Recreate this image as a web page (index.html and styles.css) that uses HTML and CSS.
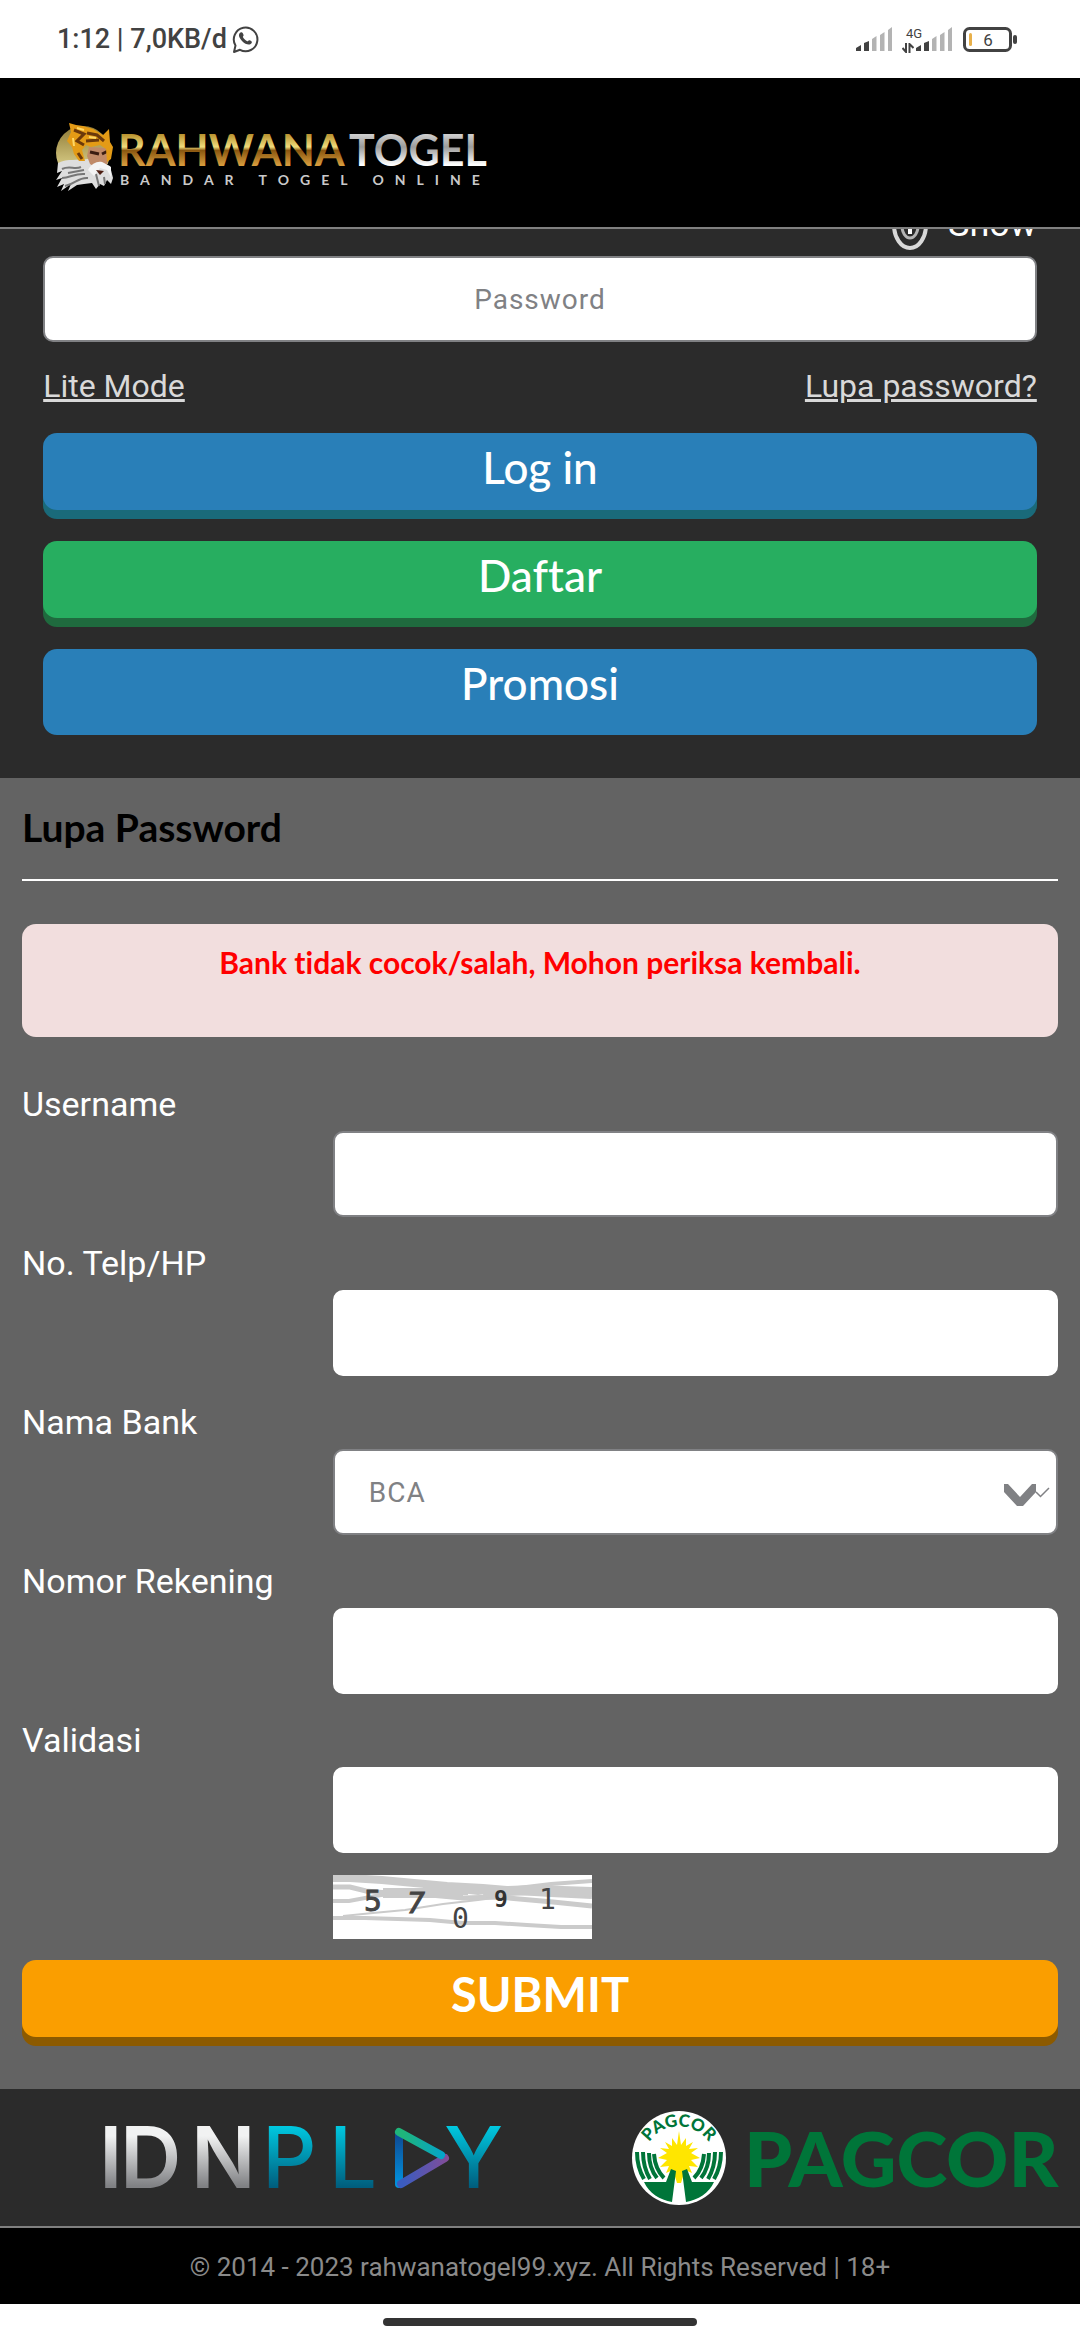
FILE: index.html
```html
<!DOCTYPE html>
<html lang="id">
<head>
  <meta charset="UTF-8" />
  <meta name="viewport" content="width=device-width, initial-scale=1.0"/>
  <title>Lupa Password</title>
  <link rel="stylesheet" href="styles.css">
</head>
<body>

  <div class="status-bar">
    <div class="status-left">
      <span>1:12 | 7,0KB/d</span>
      <svg width="27" height="29" viewBox="0 0 27 29">
        <path d="M2 27 L3.500 20.500 A11.800 11.800 0 1 1 8 24.800 Z" fill="none" stroke="#424242" stroke-width="2" stroke-linejoin="round"/>
        <path d="M8.500 7.500 C10 6.500 11 8 11.600 10 C11.800 11 10.500 11.500 11 12.300 C12 14.200 13.500 15.400 15.300 16.200 C16.200 16.300 16.500 14.800 17.500 15.200 C19.500 16 20.500 16.700 19.500 18.300 C17.500 21 13 19 10.500 16.500 C7.500 13.500 5.500 9.500 8.500 7.500 Z" fill="#424242"/>
      </svg>
    </div>
    <div class="status-right">
      <svg width="37" height="25" viewBox="0 0 37 25">
        <path d="M0 24 V21 L5 18 V24 Z M8 24 V16 L13 14 V24 Z" fill="#424242"/>
        <path d="M16 24 V12 L20.500 9 V24 Z M24 24 V8 L28.500 5 V24 Z M32 24 V3 L36 0 V24 Z" fill="#b3b3b3"/>
      </svg>
      <div class="network">
        <span>4G</span>
        <svg width="12" height="10" viewBox="0 0 12 10">
          <path d="M4 0 V9 L0.500 5 M7.500 10 V1 L11.500 5" fill="none" stroke="#424242" stroke-width="2"/>
        </svg>
      </div>
      <svg width="37" height="25" viewBox="0 0 37 25">
        <path d="M0 24 V21 L5 18 V24 Z M8 24 V16 L13 14 V24 Z" fill="#424242"/>
        <path d="M16 24 V12 L20.500 9 V24 Z M24 24 V8 L28.500 5 V24 Z M32 24 V3 L36 0 V24 Z" fill="#b3b3b3"/>
      </svg>
      <svg class="battery" width="55" height="25" viewBox="0 0 55 25">
        <rect x="1.500" y="1.500" width="46" height="22" rx="5" fill="none" stroke="#424242" stroke-width="3"/>
        <rect x="6" y="6" width="3" height="13" rx="1.500" fill="#e8b04a"/>
        <rect x="50" y="8" width="4" height="9" rx="2" fill="#424242"/>
        <text x="25" y="19" text-anchor="middle">6</text>
      </svg>
    </div>
  </div>

  <header>
    <svg class="brand" width="450" height="72" viewBox="0 0 450 72" role="img" aria-label="RAHWANATOGEL">
      <defs>
        <linearGradient id="gold" x1="0" y1="0" x2="0" y2="1">
          <stop offset="0.200" stop-color="#b8922f"/>
          <stop offset="0.450" stop-color="#f0dc7c"/>
          <stop offset="0.520" stop-color="#8a5710"/>
          <stop offset="0.800" stop-color="#d59a3c"/>
        </linearGradient>
        <linearGradient id="silver" x1="0" y1="0" x2="0" y2="1">
          <stop offset="0.200" stop-color="#cfcfcf"/>
          <stop offset="0.450" stop-color="#9c9c9c"/>
          <stop offset="0.800" stop-color="#ffffff"/>
        </linearGradient>
        <linearGradient id="moon" x1="0" y1="0" x2="0" y2="1">
          <stop offset="0" stop-color="#8f7a35"/>
          <stop offset="1" stop-color="#efe6a0"/>
        </linearGradient>
      </defs>
      <!-- moon, beard, face, crown -->
      <circle cx="33" cy="33" r="27" fill="url(#moon)"/>
      <path d="M8 43 C18 38 27 41 38 39 L60 46 L63 58 L61 64 L57 60 L54 66 L50 64 L46 69 L42 63 L34 64 L27 65 L18 71 L21 64 L11 71 L14 64 L7 67 L12 58 L6 60 L12 51 L7 53 Z" fill="#dedede"/>
      <path d="M12 49 C20 45 24 50 31 47 M12 58 C20 58 25 53 35 54 M15 66 C26 64 28 57 38 58 M18 53 L34 50 M46 54 L49 66 M54 57 L55 64" stroke="#777" stroke-width="2" fill="none"/>
      <path d="M39 27 L57 28 L59 38 L56 47 L47 48 L40 44 L37 36 Z" fill="#c08a68"/>
      <path d="M40 32 L49 34 M52 34 L58 31" stroke="#3b1d12" stroke-width="3"/>
      <path d="M38 50 C42 42 50 40 54 43 L61 47 L61 57 L57 50 L50 48 L44 56 Z" fill="#f4f4f4"/>
      <path d="M46 50 L54 51 L50 55 Z" fill="#4d1e12"/>
      <path d="M19 3 L26 5 L33 6 L43 9 L53 15 L59 9 L60 22 L63 27 L61 39 L57 42 L56 29 L50 25 L41 27 L36 25 L32 30 L35 41 L29 41 L24 34 L22 27 L17 21 L21 12 Z" fill="#e49b16"/>
      <path d="M24 10 L34 14 L27 21 L34 25 M37 13 L47 15 L54 21 M36 21 L49 20 M28 33 L32 39" stroke="#6b390b" stroke-width="3" fill="none"/>
      <path d="M27 8 L34 10 M39 17 L46 18 M23 18 L24 26" stroke="#ffd866" stroke-width="2"/>
      <text class="brand-name" x="68" y="46" fill="url(#gold)">RAHWANA</text>
      <text class="brand-name" x="299" y="46" fill="url(#silver)">TOGEL</text>
      <text class="brand-tagline" x="70" y="65" fill="#c9c9c9">BANDAR TOGEL ONLINE</text>
    </svg>
  </header>

  <section class="login">
    <div class="show-row">
      <svg width="36" height="50" viewBox="0 0 36 50">
        <ellipse cx="18" cy="25" rx="16" ry="23" fill="none" stroke="#d8d8d8" stroke-width="4"/>
        <ellipse cx="18" cy="26" rx="8" ry="12" fill="none" stroke="#b5b5b5" stroke-width="3"/>
        <path d="M18 23 V34" stroke="#fff" stroke-width="4"/>
      </svg>
      <button type="button" class="show-btn">Show</button>
    </div>
    <input class="field password" type="password" placeholder="Password" aria-label="Password">
    <div class="links">
      <a href="#">Lite Mode</a>
      <a href="#">Lupa password?</a>
    </div>
    <button class="btn btn-blue">Log in</button>
    <button class="btn btn-green">Daftar</button>
    <button class="btn btn-flat">Promosi</button>
  </section>

  <main>
    <h1>Lupa Password</h1>
    <div class="alert"><p>Bank tidak cocok/salah, Mohon periksa kembali.</p></div>

    <form>
      <div class="row">
        <label for="username">Username</label>
        <input class="field" id="username" type="text">
      </div>
      <div class="row">
        <label for="phone">No. Telp/HP</label>
        <input class="field plain" id="phone" type="text">
      </div>
      <div class="row">
        <label for="bank">Nama Bank</label>
        <div class="select-wrap">
          <select class="field" id="bank">
            <option>BCA</option>
          </select>
          <svg class="chevrons" width="46" height="22" viewBox="0 0 46 22">
            <path d="M0 0 H4 L16 13 L28 0 H32 V8 L19 22 H13 L0 8 Z" fill="#808184"/>
            <path d="M32 8 L36.500 12.500 L45 4" fill="none" stroke="#808184" stroke-width="1.500"/>
          </svg>
        </div>
      </div>
      <div class="row">
        <label for="rekening">Nomor Rekening</label>
        <input class="field plain" id="rekening" type="text">
      </div>
      <div class="row">
        <label for="validasi">Validasi</label>
        <input class="field plain" id="validasi" type="text">
      </div>
      <svg class="captcha" width="259" height="64" viewBox="0 0 259 64">
        <rect width="259" height="64" fill="#fff"/>
        <g fill="none" stroke="#cbcbcb">
          <path d="M0 3 H17 L49 5 L81 8 L114 11 L150 13 L185 16 L218 18 L259 20" stroke-width="8"/>
          <path d="M0 12 H17 L33 16 L65 19 L97 20 L130 23 L165 22 L220 27 L259 31" stroke-width="5"/>
          <path d="M0 26 H16 L48 20 L81 18 L110 14 L145 18 L185 13 L218 9 L259 6" stroke-width="4"/>
          <path d="M50 18 H130 M90 15 H135 M150 17 L200 15 L259 17" stroke-width="10"/>
          <path d="M10 41 L40 38 L72 35 L110 29 L145 25 L175 21" stroke-width="2"/>
          <path d="M0 43 H32 L97 45 L130 48 L162 48 L194 50 L228 52 H259" stroke-width="4"/>
        </g>
        <text class="digit digit-wide" x="31" y="36">5</text>
        <text class="digit digit-wide digit-slant" x="74" y="38">7</text>
        <text class="digit" x="119" y="53">0</text>
        <text class="digit digit-small" x="161" y="32">9</text>
        <text class="digit" x="206" y="34">1</text>
      </svg>
      <button class="btn btn-orange" type="submit">SUBMIT</button>
    </form>
  </main>

  <div class="partners">
    <svg width="404" height="94" viewBox="0 -15 404 94" role="img" aria-label="IDNPLAY">
      <defs>
        <linearGradient id="steel" gradientUnits="userSpaceOnUse" x1="0" y1="10" x2="0" y2="60">
          <stop offset="0" stop-color="#f1f2f2"/>
          <stop offset="1" stop-color="#808184"/>
        </linearGradient>
        <linearGradient id="teal" gradientUnits="userSpaceOnUse" x1="0" y1="0" x2="0" y2="62">
          <stop offset="0" stop-color="#00c8e0"/>
          <stop offset="1" stop-color="#005c7c"/>
        </linearGradient>
        <linearGradient id="side1" gradientUnits="userSpaceOnUse" x1="0" y1="5" x2="0" y2="60">
          <stop offset="0" stop-color="#10458e"/>
          <stop offset="1" stop-color="#0095e0"/>
        </linearGradient>
        <linearGradient id="side2" gradientUnits="userSpaceOnUse" x1="298" y1="0" x2="345" y2="0">
          <stop offset="0" stop-color="#1fb57a"/>
          <stop offset="1" stop-color="#00a2d8"/>
        </linearGradient>
        <linearGradient id="side3" gradientUnits="userSpaceOnUse" x1="298" y1="0" x2="345" y2="0">
          <stop offset="0" stop-color="#3a5cc0"/>
          <stop offset="1" stop-color="#864c96"/>
        </linearGradient>
      </defs>
      <text class="idn" x="-6" y="62" fill="url(#steel)">I</text>
      <text class="idn" x="15" y="62" fill="url(#steel)">D</text>
      <text class="idn" x="86" y="62" fill="url(#steel)">N</text>
      <text class="play" x="157" y="62" fill="url(#teal)">P</text>
      <text class="play" x="224" y="62" fill="url(#teal)">L</text>
      <g fill="none" stroke-width="8" stroke-linecap="round">
        <path d="M294 7 V58" stroke="url(#side1)"/>
        <path d="M296 58 L340 32" stroke="url(#side3)"/>
        <path d="M294 6 L336 29" stroke="url(#side2)"/>
      </g>
      <text class="play" x="339" y="62" fill="url(#teal)">Y</text>
    </svg>
    <svg width="428" height="94" viewBox="0 0 428 94" role="img" aria-label="PAGCOR">
      <defs>
        <path id="arc" d="M12 43 A36 36 0 0 1 82 43"/>
      </defs>
      <circle cx="47" cy="47" r="47" fill="#fff"/>
      <text class="badge-text"><textPath href="#arc" startOffset="50%" text-anchor="middle">PAGCOR</textPath></text>
      <path d="M47 20 L49 34 L54 27 L54 35 L61 31 L57 38 L66 37 L59 42 L68 47 L59 49 L66 56 L57 55 L60 62 L53 59 L49 72 L45 72 L41 59 L34 62 L37 55 L28 56 L35 49 L26 47 L35 42 L28 37 L37 38 L33 31 L40 35 L40 27 L45 34 Z" fill="#ffe600"/>
      <g fill="#007539">
        <path d="M12 71 H34 L39 58 L44 60 L40 91 C28 89 17 82 12 71 Z"/>
        <path d="M82 71 H60 L55 58 L50 60 L54 91 C66 89 77 82 82 71 Z"/>
      </g>
      <g fill="none" stroke="#007539" stroke-width="4">
        <path d="M5 41 Q5 56 12 68 M11 41 Q11 56 18 68 M17 42 Q17 57 25 67 M22 43 Q23 58 32 67"/>
        <path d="M89 41 Q89 56 82 68 M83 41 Q83 56 76 68 M77 42 Q77 57 69 67 M72 43 Q71 58 62 67"/>
      </g>
      <text class="pagcor" x="112" y="76">PAGCOR</text>
    </svg>
  </div>

  <footer>© 2014 - 2023 rahwanatogel99.xyz. All Rights Reserved | 18+</footer>
  <div class="nav-bar"><span class="handle"></span></div>

</body>
</html>
```

FILE: styles.css
```css
:root {
  --dark: #2b2b2b;
  --gray: #636363;
  --line: #808184;
  --radius: 14px;
}

* {
  box-sizing: border-box;
}

body {
  margin: 0;
  font-family: Roboto, 'Liberation Sans', sans-serif;
  background-color: #fff;
  color: #fff;
}

svg {
  display: block;
  flex: none;
}

.status-bar {
  display: flex;
  justify-content: space-between;
  align-items: center;
  height: 78px;
  padding: 0 62px 0 57px;
  color: #424242;
}

.status-left {
  display: flex;
  align-items: center;
  gap: 5px;
  font-size: 27px;
  font-weight: 500;
}

.status-right {
  display: flex;
  align-items: center;
}

.network {
  display: flex;
  flex-direction: column;
  align-items: flex-start;
  gap: 2px;
  margin-left: 9px;
  width: 14px;
  font-size: 13px;
  line-height: 15px;
}

.network span {
  margin-left: 4px;
}

.battery {
  margin-left: 10px;
}

.battery text {
  font-size: 17px;
  fill: #424242;
}

header {
  padding: 42px 50px 35px;
  background-color: #000;
}

.brand-name {
  font-family: Lato, sans-serif;
  font-size: 43px;
  font-weight: 700;
}

.brand-tagline {
  font-family: Lato, sans-serif;
  font-size: 14px;
  font-weight: 700;
  letter-spacing: 11px;
}

.login {
  padding: 0 4% 43px;
  background-color: var(--dark);
  border-top: 2px solid #808080;
}

.show-row {
  display: flex;
  justify-content: flex-end;
  align-items: flex-end;
  gap: 20px;
  height: 27px;
  padding-bottom: 6px;
  overflow: hidden;
}

.show-btn {
  padding: 0 0 6px;
  border: none;
  background: none;
  color: #fff;
  font: 36px/40px Roboto, sans-serif;
}

.field {
  display: block;
  width: 100%;
  height: 86px;
  padding: 0 34px;
  border: 2px solid var(--line);
  border-radius: 10px;
  background-color: #fff;
  color: var(--line);
  font: 28px Roboto, sans-serif;
  letter-spacing: 1px;
}

.field.plain {
  border-color: #fff;
}

.field::placeholder {
  color: var(--line);
}

.password {
  text-align: center;
}

.links {
  display: flex;
  justify-content: space-between;
  padding: 23px 0 25px;
  font-size: 32px;
  line-height: 43px;
}

.links a {
  color: #d9d9d9;
}

.btn {
  display: block;
  width: 100%;
  padding: 0 0 9px;
  border: none;
  border-radius: var(--radius);
  color: #fff;
  font-family: Lato, 'Noto Sans', sans-serif;
  font-size: 44px;
  font-weight: 500;
  font-variant-ligatures: none;
  line-height: 68px;
  cursor: pointer;
}

.btn-blue {
  margin-bottom: 31px;
  background-color: #297fb8;
  box-shadow: 0 9px #1a6a7a;
}

.btn-green {
  margin-bottom: 31px;
  background-color: #27ae60;
  box-shadow: 0 9px #1f6a3e;
}

.btn-flat {
  padding-bottom: 18px;
  background-color: #297fb8;
}

.btn-orange {
  background-color: #fa9e00;
  box-shadow: 0 9px #8c5a00;
  font-size: 47px;
  font-weight: 700;
}

main {
  padding: 22px 22px 52px;
  background-color: var(--gray);
}

h1 {
  margin: 0 0 43px;
  padding-bottom: 24px;
  border-bottom: 2px solid #fff;
  color: #000;
  font: 700 39px/55px Lato, 'Noto Sans', sans-serif;
}

.alert {
  margin-bottom: 43px;
  padding: 22px;
  border-radius: var(--radius);
  background-color: #f2dede;
  color: #f00;
  text-align: center;
}

.alert p {
  margin: 0 0 37px;
  font: 700 30px/32px Lato, 'Noto Sans', sans-serif;
  font-variant-ligatures: none;
}

.row {
  display: flex;
  flex-direction: column;
  align-items: flex-end;
  margin-bottom: 22px;
}

.row label {
  width: 100%;
  padding-bottom: 3px;
  font-size: 34px;
  line-height: 48px;
}

.row .field {
  width: 70%;
}

.select-wrap {
  position: relative;
  width: 70%;
}

.select-wrap .field {
  width: 100%;
  appearance: none;
}

.chevrons {
  position: absolute;
  top: 35px;
  right: 8px;
  pointer-events: none;
}

.captcha {
  margin: 0 0 21px 30%;
}

.digit {
  font-family: 'DejaVu Sans Mono', monospace;
  font-size: 28px;
  fill: #444;
}

.digit-wide {
  font-family: 'DejaVu Sans', sans-serif;
  stroke: #444;
}

.digit-slant {
  font-style: italic;
}

.digit-small {
  font-size: 23px;
  font-weight: 700;
  fill: #333;
}

.partners {
  display: flex;
  justify-content: space-between;
  align-items: center;
  padding: 22px 20px 21px 105px;
  background-color: var(--dark);
  border-bottom: 2px solid #808080;
}

.idn {
  font: 600 85px Inter, sans-serif;
}

.play {
  font: 500 85px Inter, sans-serif;
}

.pagcor {
  font: 900 77px Lato, sans-serif;
  fill: #007539;
}

.badge-text {
  font: 900 17px Lato, sans-serif;
  fill: #007539;
}

footer {
  padding: 20px 20px 18px;
  background-color: #000;
  color: #8a8a8a;
  font-size: 26px;
  line-height: 38px;
  text-align: center;
}

.nav-bar {
  display: flex;
  justify-content: center;
  align-items: center;
  height: 36px;
}

.handle {
  width: 29%;
  height: 8px;
  border-radius: 4px;
  background-color: #333;
}
```
